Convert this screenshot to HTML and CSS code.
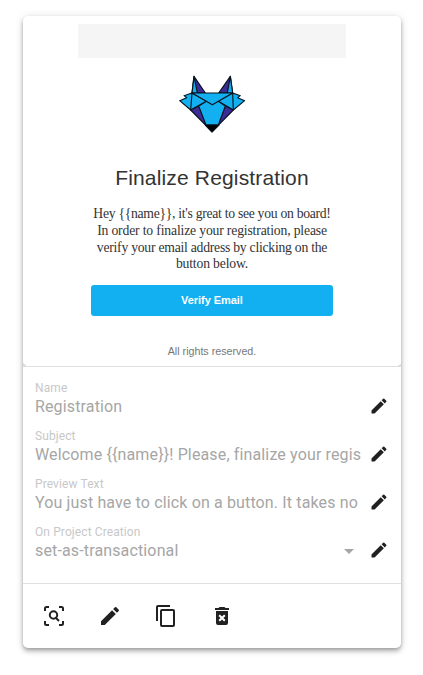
FILE: index.html
```
<!DOCTYPE html>
<html lang="en">
<head>
<meta charset="utf-8">
<title>Email template</title>
<link rel="stylesheet" href="styles.css">
</head>
<body>
<svg class="defs" aria-hidden="true"><symbol id="pencil" viewBox="0 0 24 24"><path d="M3 17.25V21h3.75L17.81 9.94l-3.75-3.75L3 17.25zM20.71 7.04a1 1 0 0 0 0-1.41l-2.34-2.34a1 1 0 0 0-1.41 0l-1.83 1.83 3.75 3.75 1.83-1.83z"/></symbol></svg>
<main class="card">
  <section class="preview">
    <div class="banner"></div>
    <svg class="logo" viewBox="24 30 204 174" stroke="#07121c" stroke-width="3.4" stroke-linejoin="round">
      <path fill="#3b2c96" d="M72 34L66 84H106ZM181 34L146 84H188ZM62 135L126 200L190 135L166 123H86Z"/>
      <path fill="#12b0f0" d="M72 34L66 84H82ZM181 34L172 84H188Z"/>
      <path fill="#12b0f0" d="M86 123L110 108H144L166 123L145 180H108Z"/>
      <path fill="#12b0f0" stroke="none" d="M66 84H188L144 110H110Z"/>
      <path fill="#12b0f0" d="M66 84L42 92L50 98L29 107L62 135L110 108ZM188 84L211 92L203 98L224 107L190 135L144 108Z"/>
      <path fill="#12b0f0" d="M66 84H188L127 119Z"/>
      <path fill="none" d="M66 84L62 135M188 84L190 135"/>
      <path fill="#000" d="M106 180H147L126 201Z"/>
    </svg>
    <h1>Finalize Registration</h1>
    <p class="message"><span>Hey {{name}}, it's great to see you on board!</span><span>In order to finalize your registration, please</span><span>verify your email address by clicking on the</span><span>button below.</span></p>
    <div class="verify">Verify Email</div>
    <p class="rights">All rights reserved.</p>
    <i class="corner left"></i><i class="corner right"></i>
  </section>
  <section class="fields">
    <div class="field"><div class="control"><label>Name</label><div class="value">Registration</div></div><svg class="edit"><use href="#pencil"/></svg></div>
    <div class="field"><div class="control"><label>Subject</label><div class="value">Welcome {{name}}! Please, finalize your regis</div></div><svg class="edit"><use href="#pencil"/></svg></div>
    <div class="field"><div class="control"><label>Preview Text</label><div class="value">You just have to click on a button. It takes no</div></div><svg class="edit"><use href="#pencil"/></svg></div>
    <div class="field"><div class="control"><label>On Project Creation</label><div class="value select">set-as-transactional<i class="arrow"></i></div></div><svg class="edit"><use href="#pencil"/></svg></div>
  </section>
  <footer class="actions">
    <svg viewBox="0 0 24 24"><path fill="none" stroke="#212121" stroke-width="2" d="M3 7V4.5Q3 3 4.5 3H7M17 3h2.500Q21 3 21 4.500V7M21 17v2.500Q21 21 19.500 21H17M7 21H4.500Q3 21 3 19.500V17M13.300 13.300L17 17"/><circle cx="11.500" cy="11" r="3.700" fill="none" stroke="#212121" stroke-width="2"/></svg>
    <svg><use href="#pencil"/></svg>
    <svg viewBox="0 0 24 24"><path d="M16 1H4a2 2 0 0 0-2 2v14h2V3h12V1zm3 4H8a2 2 0 0 0-2 2v14a2 2 0 0 0 2 2h11a2 2 0 0 0 2-2V7a2 2 0 0 0-2-2zm0 16H8V7h11v14z"/></svg>
    <svg viewBox="0 0 24 24"><path d="M6 19a2 2 0 0 0 2 2h8a2 2 0 0 0 2-2V7H6v12zm2.460-7.120l1.410-1.410L12 12.590l2.120-2.120 1.410 1.410L13.410 14l2.120 2.120-1.410 1.410L12 15.410l-2.120 2.120-1.410-1.410L10.590 14l-2.130-2.120zM15.500 4l-1-1h-5l-1 1H5v2h14V4z"/></svg>
  </footer>
</main>
</body>
</html>
```
FILE: styles.css
```
* { box-sizing: border-box; }
body {
  margin: 0;
  height: 675px;
  padding: 16px 22px 0 23px;
  background: #fff;
  font-family: Roboto, sans-serif;
}
.defs { position: absolute; width: 0; height: 0; }
.card {
  height: 632px;
  border-radius: 5px;
  background: #fff;
  box-shadow: 0 2px 4px -1px rgba(0,0,0,.3), 0 4px 5px rgba(0,0,0,.14), 0 1px 10px rgba(0,0,0,.12);
}
.preview {
  position: relative;
  display: flex;
  flex-direction: column;
  align-items: center;
  height: 351px;
  padding-top: 8px;
  border-bottom: 1px solid #e0e0e0;
}
.banner { width: 268px; height: 34px; background: #f5f5f5; }
.logo { width: 68px; height: 58px; margin-top: 17px; }
h1 {
  margin: 33px 0 0;
  font: 400 21px/24px "Liberation Sans", Arial, sans-serif;
  letter-spacing: .16px;
  color: #333;
  white-space: nowrap;
}
.message {
  margin: 16px 0 0;
  font: 13.700px/16.750px "Liberation Serif", serif;
  letter-spacing: -.17px;
  color: #333;
  text-align: center;
  white-space: nowrap;
}
.message span { display: block; }
.message span:first-child { letter-spacing: -.29px; }
.message span:nth-child(3) { letter-spacing: -.25px; }
.verify {
  width: 242px;
  height: 31px;
  margin-top: 12px;
  border-radius: 3px;
  background: #12b0f0;
  color: #fff;
  font: bold 11px/30px "Liberation Sans", Arial, sans-serif;
  letter-spacing: -.05px;
  text-align: center;
}
.rights {
  margin: 29px 0 0;
  font: 10.700px/13px "Liberation Sans", Arial, sans-serif;
  color: #777;
}
.corner { position: absolute; bottom: 0; width: 3px; height: 3px; }
.left { left: 0; background: linear-gradient(45deg, #ddd 50%, transparent 50%); }
.right { right: 0; background: linear-gradient(-45deg, #ddd 50%, transparent 50%); }
.fields {
  height: 217px;
  padding: 12px 12px 0 12px;
  border-bottom: 1px solid #e0e0e0;
}
.field { display: flex; height: 48px; }
.control { width: 327px; margin-right: 6.500px; }
label {
  display: block;
  font-size: 12px;
  line-height: 18px;
  letter-spacing: .1px;
  color: #c8c8c8;
}
.value {
  font-size: 16px;
  line-height: 20px;
  letter-spacing: .14px;
  color: #a6a6a6;
  overflow: hidden;
  white-space: nowrap;
}
.edit { width: 20px; height: 20px; margin-top: 17px; fill: #212121; }
.select { display: flex; align-items: center; justify-content: space-between; }
.arrow {
  margin-right: 8px;
  border: 5px solid transparent;
  border-top-color: #a6a6a6;
  border-bottom: 0;
}
.actions { display: flex; gap: 32px; padding: 20px 19px; }
.actions svg { width: 24px; height: 24px; fill: #212121; }
```
